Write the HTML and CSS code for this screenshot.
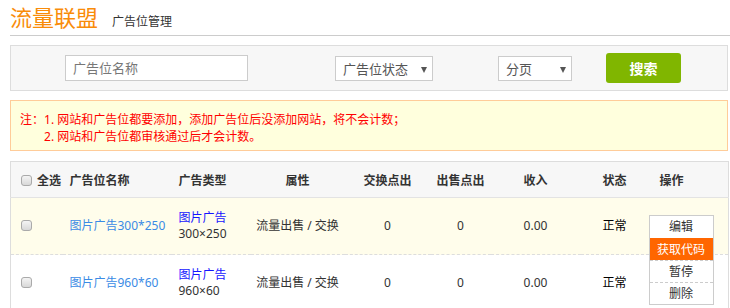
FILE: index.html
```html
<!DOCTYPE html>
<html lang="zh-CN">
<head>
  <meta charset="UTF-8" />
  <title>流量联盟 - 广告位管理</title>
  <link rel="stylesheet" href="styles.css">
</head>
<body>
  <div class="page">
    <header class="top">
      <h1>流量联盟</h1>
      <span class="crumb">广告位管理</span>
    </header>

    <div class="search-bar">
      <div class="field name-field">广告位名称</div>
      <div class="fake-select status-select">广告位状态<i class="arrow"></i></div>
      <div class="fake-select page-select">分页<i class="arrow"></i></div>
      <button class="search-btn">搜索</button>
    </div>

    <div class="notice">
      <span class="notice-label">注：</span>
      <div>
        <p>1. 网站和广告位都要添加，添加广告位后没添加网站，将不会计数；</p>
        <p>2. 网站和广告位都审核通过后才会计数。</p>
      </div>
    </div>

    <table class="ad-table">
      <colgroup>
        <col style="width:52px"><col style="width:109px"><col style="width:79px">
        <col style="width:94px"><col style="width:86px"><col style="width:60px">
        <col style="width:90px"><col style="width:68px"><col style="width:80px">
      </colgroup>
      <thead>
        <tr>
          <th class="chk-col"><span class="chk"></span>全选</th>
          <th class="left">广告位名称</th>
          <th class="left">广告类型</th>
          <th>属性</th>
          <th>交换点出</th>
          <th>出售点出</th>
          <th>收入</th>
          <th>状态</th>
          <th class="left op-head">操作</th>
        </tr>
      </thead>
      <tbody>
        <tr class="active">
          <td class="chk-col"><span class="chk"></span></td>
          <td class="left"><a class="ad-name" href="#">图片广告300*250</a></td>
          <td class="left type"><a href="#">图片广告</a><br>300×250</td>
          <td>流量出售 / 交换</td>
          <td>0</td>
          <td>0</td>
          <td>0.00</td>
          <td class="state">正常</td>
          <td class="op-cell">
            <ul class="op-menu">
              <li>编辑</li>
              <li class="on">获取代码</li>
              <li>暂停</li>
              <li>删除</li>
            </ul>
          </td>
        </tr>
        <tr>
          <td class="chk-col"><span class="chk"></span></td>
          <td class="left"><a class="ad-name" href="#">图片广告960*60</a></td>
          <td class="left type"><a href="#">图片广告</a><br>960×60</td>
          <td>流量出售 / 交换</td>
          <td>0</td>
          <td>0</td>
          <td>0.00</td>
          <td class="state">正常</td>
          <td></td>
        </tr>
      </tbody>
    </table>
  </div>
</body>
</html>
```

FILE: styles.css
```css
body {
  margin: 0;
  font-family: "Noto Sans", "Noto Sans CJK SC", sans-serif;
  font-size: 12px;
  color: #333;
  background: #fff;
}

.page {
  padding: 0 2px 0 10px;
}

.top {
  display: flex;
  align-items: baseline;
  height: 35px;
  border-bottom: 1px solid #ccc;
  margin-right: -2px;
}

.top h1 {
  margin: 0;
  font-size: 22px;
  font-weight: normal;
  line-height: 35px;
  color: #f98c0a;
}

.crumb {
  margin-left: 14px;
  color: #333;
}

.search-bar {
  display: flex;
  align-items: center;
  height: 44px;
  margin-top: 9px;
  padding-left: 54px;
  border: 1px solid #ddd;
  background: #f7f7f7;
}

.field,
.fake-select {
  box-sizing: border-box;
  height: 26px;
  line-height: 24px;
  padding: 0 7px;
  border: 1px solid #ccc;
  background: #fff;
  font-size: 13px;
  color: #555;
}

.name-field {
  width: 183px;
  color: #777;
}

.fake-select {
  position: relative;
  height: 25px;
}

.status-select {
  width: 98px;
  margin-left: 87px;
}

.page-select {
  width: 74px;
  margin-left: 65px;
}

.arrow {
  position: absolute;
  right: 5px;
  top: 10px;
  border-left: 3.5px solid transparent;
  border-right: 3.5px solid transparent;
  border-top: 6px solid #555;
}

.search-btn {
  width: 75px;
  height: 30px;
  margin-left: 34px;
  border: none;
  border-radius: 3px;
  background: #80b600;
  color: #fff;
  font-family: inherit;
  font-size: 14px;
  font-weight: bold;
}

.notice {
  display: flex;
  margin-top: 9px;
  padding: 10px 9px 5px;
  border: 1px solid #fc9;
  background: #ffffdd;
  color: #f00;
  line-height: 17px;
}

.notice p {
  margin: 0;
}

.ad-table {
  width: 718px;
  margin-top: 10px;
  border: 1px solid #ddd;
  border-collapse: collapse;
  table-layout: fixed;
  text-align: center;
}

.ad-table th {
  height: 35px;
  padding: 0;
  background: #f7f7f7;
  border-bottom: 1px solid #e3e3e3;
  font-weight: bold;
  color: #333;
  white-space: nowrap;
}

.ad-table td {
  height: 56px;
  padding: 0;
  line-height: 16px;
}

.ad-table tbody tr.active td {
  background: #fffdeb;
  border-bottom: 1px dashed #ddd;
}

.ad-table .left {
  text-align: left;
  padding-left: 7px;
}

.ad-table .chk-col {
  text-align: left;
  padding-left: 10px;
}

.chk {
  display: inline-block;
  vertical-align: -1px;
  width: 9px;
  height: 9px;
  margin-right: 5px;
  border: 1px solid #aaa;
  border-radius: 3px;
  background: linear-gradient(#f4f4f4, #d8d8d8);
}

.ad-name {
  color: #3b8be5;
  text-decoration: none;
}

.type a {
  color: #1515ff;
  text-decoration: none;
}

.state {
  color: #000;
}

.ad-table th.op-head {
  padding-left: 11px;
}

.op-cell {
  position: relative;
}

.op-menu {
  position: absolute;
  left: 0;
  top: 17px;
  z-index: 5;
  width: 63px;
  margin: 0;
  padding: 0;
  list-style: none;
  border: 1px solid #ccc;
  background: #fff;
}

.op-menu li {
  height: 21px;
  line-height: 21px;
  border-top: 1px dashed #ccc;
  color: #333;
}

.op-menu li:first-child {
  border-top: none;
  height: 22px;
}

.op-menu li.on {
  background: #ff6600;
  color: #fff;
  border-top-color: #ff6600;
}
```
